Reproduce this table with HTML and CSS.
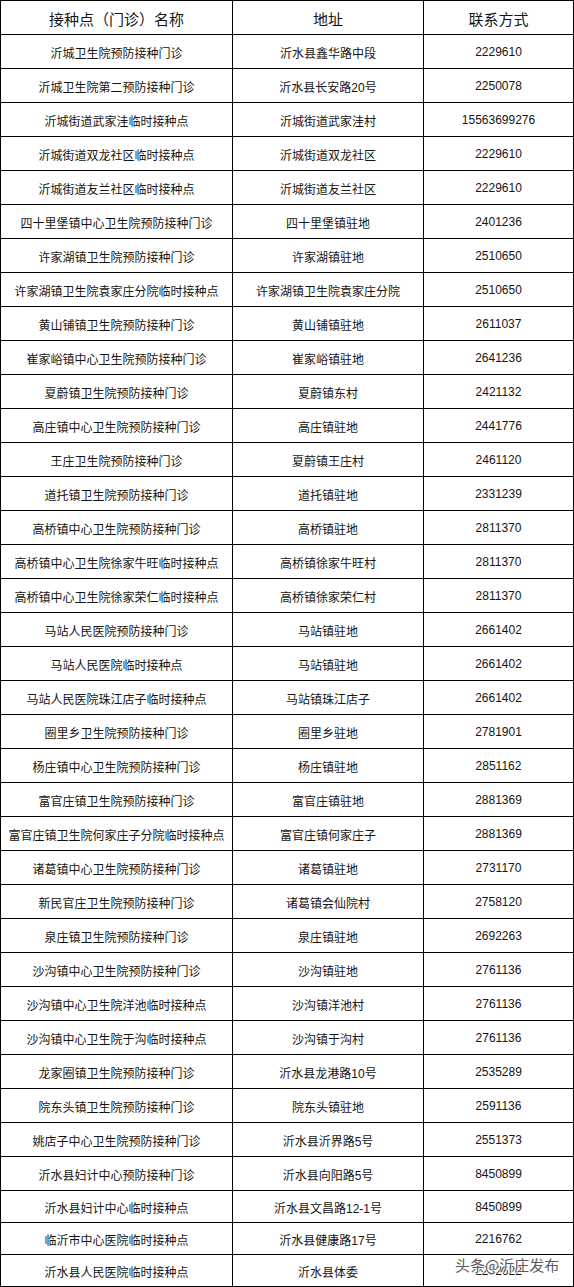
FILE: index.html
```html
<!DOCTYPE html>
<html lang="zh-CN">
<head>
<meta charset="utf-8">
<title>接种点名单</title>
<link rel="stylesheet" href="styles.css">
</head>
<body>
<div class="sheet">
  <div class="grid">
    <div class="cell head">接种点（门诊）名称</div><div class="cell head">地址</div><div class="cell head">联系方式</div>
    <div class="cell">沂城卫生院预防接种门诊</div><div class="cell">沂水县鑫华路中段</div><div class="cell num">2229610</div>
    <div class="cell">沂城卫生院第二预防接种门诊</div><div class="cell">沂水县长安路20号</div><div class="cell num">2250078</div>
    <div class="cell">沂城街道武家洼临时接种点</div><div class="cell">沂城街道武家洼村</div><div class="cell num">15563699276</div>
    <div class="cell">沂城街道双龙社区临时接种点</div><div class="cell">沂城街道双龙社区</div><div class="cell num">2229610</div>
    <div class="cell">沂城街道友兰社区临时接种点</div><div class="cell">沂城街道友兰社区</div><div class="cell num">2229610</div>
    <div class="cell">四十里堡镇中心卫生院预防接种门诊</div><div class="cell">四十里堡镇驻地</div><div class="cell num">2401236</div>
    <div class="cell">许家湖镇卫生院预防接种门诊</div><div class="cell">许家湖镇驻地</div><div class="cell num">2510650</div>
    <div class="cell">许家湖镇卫生院袁家庄分院临时接种点</div><div class="cell">许家湖镇卫生院袁家庄分院</div><div class="cell num">2510650</div>
    <div class="cell">黄山铺镇卫生院预防接种门诊</div><div class="cell">黄山铺镇驻地</div><div class="cell num">2611037</div>
    <div class="cell">崔家峪镇中心卫生院预防接种门诊</div><div class="cell">崔家峪镇驻地</div><div class="cell num">2641236</div>
    <div class="cell">夏蔚镇卫生院预防接种门诊</div><div class="cell">夏蔚镇东村</div><div class="cell num">2421132</div>
    <div class="cell">高庄镇中心卫生院预防接种门诊</div><div class="cell">高庄镇驻地</div><div class="cell num">2441776</div>
    <div class="cell">王庄卫生院预防接种门诊</div><div class="cell">夏蔚镇王庄村</div><div class="cell num">2461120</div>
    <div class="cell">道托镇卫生院预防接种门诊</div><div class="cell">道托镇驻地</div><div class="cell num">2331239</div>
    <div class="cell">高桥镇中心卫生院预防接种门诊</div><div class="cell">高桥镇驻地</div><div class="cell num">2811370</div>
    <div class="cell">高桥镇中心卫生院徐家牛旺临时接种点</div><div class="cell">高桥镇徐家牛旺村</div><div class="cell num">2811370</div>
    <div class="cell">高桥镇中心卫生院徐家荣仁临时接种点</div><div class="cell">高桥镇徐家荣仁村</div><div class="cell num">2811370</div>
    <div class="cell">马站人民医院预防接种门诊</div><div class="cell">马站镇驻地</div><div class="cell num">2661402</div>
    <div class="cell">马站人民医院临时接种点</div><div class="cell">马站镇驻地</div><div class="cell num">2661402</div>
    <div class="cell">马站人民医院珠江店子临时接种点</div><div class="cell">马站镇珠江店子</div><div class="cell num">2661402</div>
    <div class="cell">圈里乡卫生院预防接种门诊</div><div class="cell">圈里乡驻地</div><div class="cell num">2781901</div>
    <div class="cell">杨庄镇中心卫生院预防接种门诊</div><div class="cell">杨庄镇驻地</div><div class="cell num">2851162</div>
    <div class="cell">富官庄镇卫生院预防接种门诊</div><div class="cell">富官庄镇驻地</div><div class="cell num">2881369</div>
    <div class="cell">富官庄镇卫生院何家庄子分院临时接种点</div><div class="cell">富官庄镇何家庄子</div><div class="cell num">2881369</div>
    <div class="cell">诸葛镇中心卫生院预防接种门诊</div><div class="cell">诸葛镇驻地</div><div class="cell num">2731170</div>
    <div class="cell">新民官庄卫生院预防接种门诊</div><div class="cell">诸葛镇会仙院村</div><div class="cell num">2758120</div>
    <div class="cell">泉庄镇卫生院预防接种门诊</div><div class="cell">泉庄镇驻地</div><div class="cell num">2692263</div>
    <div class="cell">沙沟镇中心卫生院预防接种门诊</div><div class="cell">沙沟镇驻地</div><div class="cell num">2761136</div>
    <div class="cell">沙沟镇中心卫生院洋池临时接种点</div><div class="cell">沙沟镇洋池村</div><div class="cell num">2761136</div>
    <div class="cell">沙沟镇中心卫生院于沟临时接种点</div><div class="cell">沙沟镇于沟村</div><div class="cell num">2761136</div>
    <div class="cell">龙家圈镇卫生院预防接种门诊</div><div class="cell">沂水县龙港路10号</div><div class="cell num">2535289</div>
    <div class="cell">院东头镇卫生院预防接种门诊</div><div class="cell">院东头镇驻地</div><div class="cell num">2591136</div>
    <div class="cell">姚店子中心卫生院预防接种门诊</div><div class="cell">沂水县沂界路5号</div><div class="cell num">2551373</div>
    <div class="cell">沂水县妇计中心预防接种门诊</div><div class="cell">沂水县向阳路5号</div><div class="cell num">8450899</div>
    <div class="cell">沂水县妇计中心临时接种点</div><div class="cell">沂水县文昌路12-1号</div><div class="cell num">8450899</div>
    <div class="cell">临沂市中心医院临时接种点</div><div class="cell">沂水县健康路17号</div><div class="cell num">2216762</div>
    <div class="cell">沂水县人民医院临时接种点</div><div class="cell">沂水县体委</div><div class="cell num">2232622</div>
  </div>
  <div class="watermark">头条@沂庄发布</div>
</div>
</body>
</html>
```

FILE: styles.css
```css
html, body {
  margin: 0;
  padding: 0;
  background: #ffffff;
}

.sheet {
  position: relative;
  width: 574px;
  height: 1287px;
  overflow: hidden;
}

.grid {
  display: grid;
  grid-template-columns: 232px 191px 150px;
  grid-template-rows: repeat(35, 34px) repeat(3, 32px);
  border-left: 1px solid #000;
  border-top: 1px solid #000;
  font-family: "Liberation Sans", "Noto Sans CJK SC", sans-serif;
  color: #141414;
}

.cell {
  box-sizing: border-box;
  border-right: 1px solid #000;
  border-bottom: 1px solid #000;
  display: flex;
  align-items: center;
  justify-content: center;
  font-size: 12px;
  white-space: nowrap;
  padding-top: 1px;
}

.head {
  font-size: 15px;
}

.num {
  font-size: 12px;
}

.watermark {
  position: absolute;
  left: 455px;
  top: 1255px;
  font-family: "Noto Sans CJK SC", sans-serif;
  font-size: 15px;
  line-height: 20px;
  color: #5a5a5a;
  text-shadow: 0 0 2px #fff, 0 0 2px #fff, 1px 1px 1px #fff;
  letter-spacing: 0;
}
```
